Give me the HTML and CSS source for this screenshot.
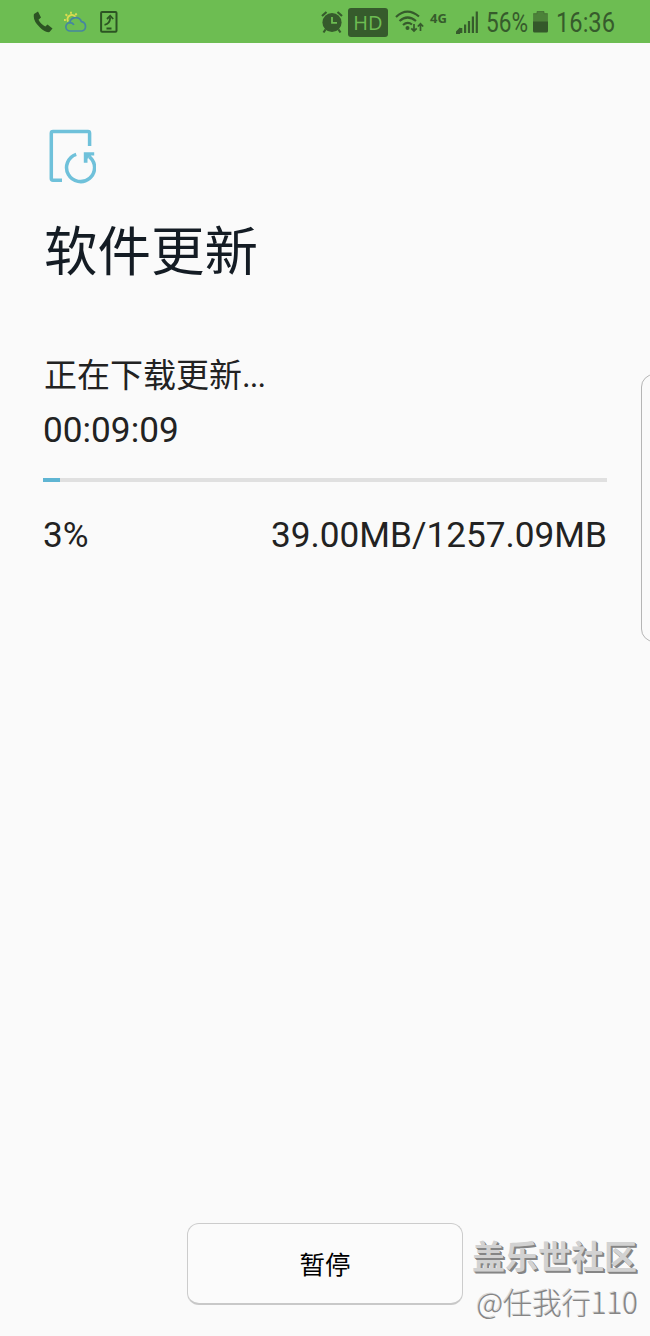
FILE: index.html
```html
<!DOCTYPE html>
<html lang="zh-CN">
<head>
  <meta charset="UTF-8">
  <meta name="viewport" content="width=device-width, initial-scale=1.0">
  <title>软件更新</title>
  <link rel="stylesheet" href="styles.css">
</head>
<body>

  <header class="status-bar">
    <svg class="icon-phone" width="20" height="22" viewBox="0 0 20 22">
      <path d="M1 3 L5 0.5 L8 6.5 L5.5 8.7 Q8 13.5 12.3 15.4 L14.5 13.5 L19.5 17.5 L16.5 21 Q12 22 6.5 16 Q-0.5 9 1 3Z" fill="#2c5423"/>
    </svg>
    <svg class="icon-weather" width="24" height="22" viewBox="0 0 24 22">
      <g fill="none" stroke="#dcdc50" stroke-width="1.9">
        <path d="M4 10.5a4 4 0 0 1 7.5-4.3"/>
        <path d="M7 0.8v2M1.5 3.3l1.7 1.5M12.7 2.5l-1.5 1.7M0 9h1.8"/>
      </g>
      <path d="M6.3 20a4.2 4.2 0 0 1-.5-8.4 6 6 0 0 1 11.6-1 4.8 4.8 0 0 1 .5 9.4zM5.8 11.6q3 .1 4 2.4" fill="none" stroke="#4686a0" stroke-width="1.7"/>
    </svg>
    <svg class="icon-update" width="18" height="22" viewBox="0 0 18 22">
      <rect x="1.1" y="1.1" width="15.4" height="19.6" rx="1" fill="none" stroke="#2c5423" stroke-width="2"/>
      <path d="M4.5 13.8Q10 13 10.2 6.5M7 8L10.2 4.7L13.2 8M6.5 17.5h5" fill="none" stroke="#2c5423" stroke-width="1.8"/>
    </svg>

    <div class="status-right">
      <svg class="icon-alarm" width="22" height="24" viewBox="0 0 22 24">
        <circle cx="11" cy="12.5" r="9.6" fill="#365b2c"/>
        <path d="M1 6L5.5 2M16.5 2L21 6M4.5 19.5L2.5 22.5M17.5 19.5L19.5 22.5" stroke="#365b2c" stroke-width="2.2"/>
        <path d="M11 7v5.8h5" fill="none" stroke="#6dbd52" stroke-width="1.8"/>
      </svg>
      <span class="hd">HD</span>
      <svg class="icon-wifi" width="30" height="24" viewBox="0 0 30 24">
        <g fill="none" stroke="#365b2c" stroke-width="2.2">
          <path d="M1 7Q12-3.5 24 6.5"/>
          <path d="M4.5 11Q12.5 4 21 11"/>
          <path d="M8 15Q12.5 11 17 14.5"/>
        </g>
        <circle cx="12.5" cy="18" r="2" fill="#365b2c"/>
        <path d="M19 14v7M16.3 18.3L19 21l2.7-2.7M25.5 21v-7M22.8 16.5L25.5 13.8l2.7 2.7" fill="none" stroke="#365b2c" stroke-width="1.7"/>
      </svg>
      <span class="network">4G</span>
      <svg class="icon-signal" width="22" height="24" viewBox="0 0 22 24">
        <path d="M0 23l3-3v3zM5.2 23v-5M9.1 23v-8.5M13 23V11M16.9 23V6.5M20.8 23V1.5" fill="#365b2c" stroke="#365b2c" stroke-width="2.2"/>
      </svg>
      <svg class="percent" width="49" height="40">
        <text x="3" y="30" textLength="42" lengthAdjust="spacingAndGlyphs">56%</text>
      </svg>
      <svg class="icon-battery" width="15" height="22" viewBox="0 0 15 22">
        <path d="M4 0.5h7v2h3.2V11H0.8V2.5H4z" fill="#4c8239"/>
        <path d="M0.3 11V2.7H4V0.5h7v2.2h3.7V11" fill="none" stroke="#426f33" stroke-width="0.8"/>
        <path d="M0 10.5h15V20q0 1.5-1.5 1.5h-12Q0 21.5 0 20z" fill="#34582a"/>
      </svg>
      <svg class="time" width="66" height="40">
        <text x="3" y="30" textLength="59" lengthAdjust="spacingAndGlyphs">16:36</text>
      </svg>
    </div>
  </header>

  <main class="content">
    <svg class="logo" width="50" height="56" viewBox="0 0 50 56">
      <g fill="none" stroke="#6fc1da" stroke-width="3.5">
        <path d="M16 52.3H7Q5.3 52.3 5.3 50.6V5.3Q5.3 3.6 7 3.6H42Q43.6 3.6 43.6 5.3V18"/>
        <path d="M30.2 26.3A14 14 0 1 0 43.5 28.8"/>
      </g>
      <path d="M37.8 24.2h10.4v3.4h-3l-3.7 3.2v4h-3.7z" fill="#6fc1da"/>
    </svg>
    <h1>软件更新</h1>
    <p class="message">正在下载更新<span>...</span></p>
    <p class="remaining">00:09:09</p>
    <div class="progress"><div class="progress-bar" style="width: 3.1%"></div></div>
    <div class="amount">
      <span>3%</span>
      <span>39.00MB/1257.09MB</span>
    </div>
  </main>

  <footer class="footer">
    <button class="pause">暂停</button>
  </footer>

  <div class="edge-panel"></div>
  <div class="watermark">
    <div class="community">盖乐世社区</div>
    <div class="user">@任我行110</div>
  </div>

</body>
</html>
```
FILE: styles.css
```css
* {
  box-sizing: border-box;
}

body {
  margin: 0;
  height: 1336px;
  display: flex;
  flex-direction: column;
  position: relative;
  overflow: hidden;
  background-color: #fafafa;
  color: #222;
  font-family: Roboto, "Noto Sans CJK SC", sans-serif;
}

svg {
  display: block;
  flex: none;
}

.status-bar {
  height: 43px;
  padding: 1px 31px 0 33px;
  display: flex;
  align-items: center;
  background-color: #6dbd52;
}

.icon-weather {
  margin-left: 11px;
}

.icon-update {
  margin-left: 12px;
}

.status-right {
  margin-left: auto;
  display: flex;
  align-items: center;
}

.hd {
  width: 40px;
  height: 29px;
  margin-left: 5px;
  border-radius: 3px;
  background-color: #365b2c;
  color: #6dbd52;
  font: 20px/29px "Open Sans", sans-serif;
  text-align: center;
}

.icon-wifi {
  margin-left: 7px;
}

.network {
  width: 19px;
  margin: -9px 0 0 5px;
  color: #365b2c;
  font: bold 13px/16px "Open Sans", sans-serif;
}

.icon-signal {
  margin-left: 7px;
}

.percent {
  margin-left: 5px;
}

.icon-battery {
  margin-left: 1px;
}

.time {
  margin-left: 5px;
}

.percent text,
.time text {
  font-family: Roboto, sans-serif;
  font-size: 27px;
  fill: #365b2c;
}

.content {
  padding: 85px 43px 0;
}

.logo {
  margin-left: 3px;
}

h1 {
  margin: 24px 0 0 1px;
  color: #141c24;
  font: 400 53.5px/80px "Noto Sans CJK SC", sans-serif;
}

p {
  margin: 0;
}

.message {
  margin: 60px 0 0 1px;
  font: 33px/50px "Noto Sans CJK SC", sans-serif;
}

.message span {
  font-family: Roboto, sans-serif;
  letter-spacing: -1px;
}

.remaining {
  margin-top: 8px;
  font-size: 35.2px;
  line-height: 42px;
}

.progress {
  height: 4px;
  margin-top: 27px;
  background-color: #e0e0e0;
}

.progress-bar {
  height: 4px;
  background-color: #5fb5d3;
}

.amount {
  margin-top: 32px;
  display: flex;
  justify-content: space-between;
  font-size: 35.2px;
  line-height: 42px;
}

.footer {
  margin-top: auto;
  padding-bottom: 31px;
  display: flex;
  justify-content: center;
}

.pause {
  width: 276px;
  height: 82px;
  padding: 0 0 2px;
  border: 1px solid #ccc;
  border-bottom: 2px solid #c8c8c8;
  border-radius: 12px;
  background-color: #fbfbfb;
  color: #000;
  font: 25.5px "Noto Sans CJK SC", sans-serif;
}

/* handle of the side panel, mostly off screen */
.edge-panel {
  position: absolute;
  top: 374px;
  left: 641px;
  width: 30px;
  height: 268px;
  border: 1px solid #b5b5b5;
  border-radius: 13px;
}

.watermark {
  position: absolute;
  right: 12px;
  bottom: 12px;
  text-align: right;
  white-space: nowrap;
  font-family: "Noto Sans CJK SC", sans-serif;
}

.community {
  margin-right: 1px;
  color: #d2d2d2;
  font-size: 33px;
  font-weight: 700;
  line-height: 46px;
  text-shadow: 1px 1px #858585, 2px 2px #858585;
}

.user {
  color: #858585;
  font-size: 29.3px;
  font-weight: 300;
  line-height: 46px;
  text-shadow: -1px -1px #d8d8d8;
}
```
